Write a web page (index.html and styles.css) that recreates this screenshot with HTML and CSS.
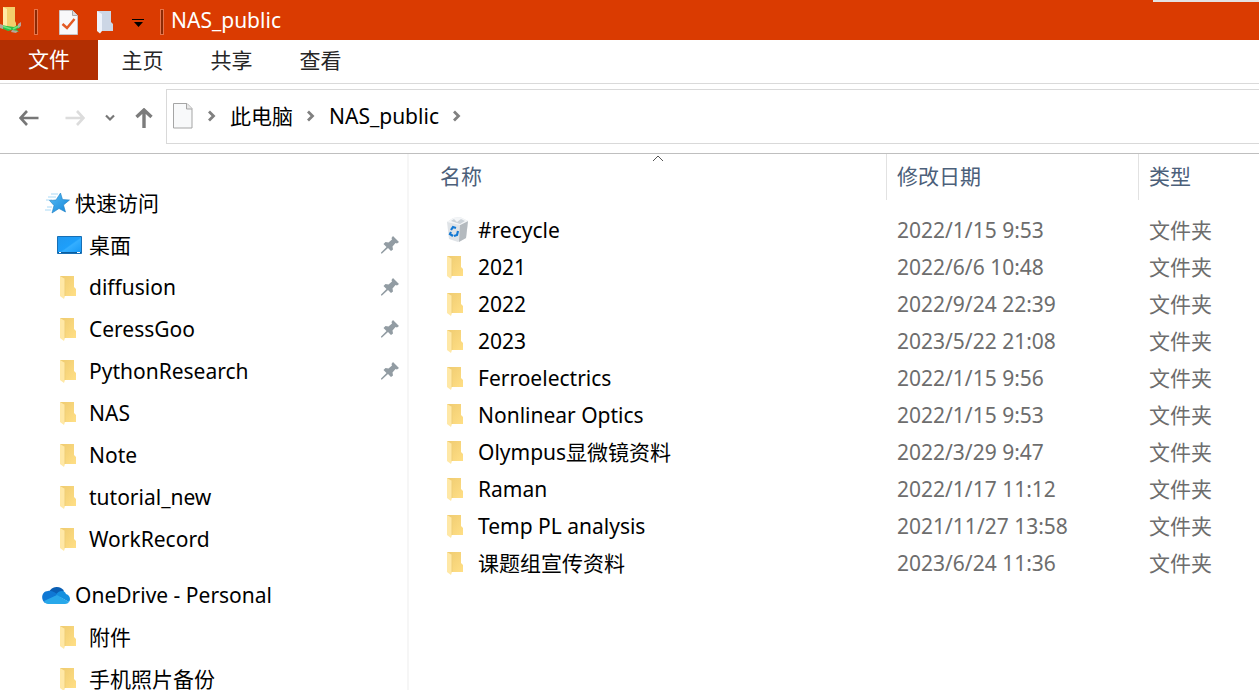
FILE: index.html
```html
<!DOCTYPE html>
<html lang="zh-CN">
<head>
<meta charset="utf-8">
<title>NAS_public</title>
<link rel="stylesheet" href="styles.css">
</head>
<body>
<svg class="sprite" aria-hidden="true">
  <defs>
    <linearGradient id="g-folder" x1="0" y1="0" x2="1" y2="1"><stop offset="0" stop-color="#efcb70"/><stop offset="1" stop-color="#ffdf86"/></linearGradient>
    <linearGradient id="g-desk" x1="0" y1="0" x2="1" y2="1"><stop offset="0" stop-color="#2098f0"/><stop offset=".5" stop-color="#1e9ffa"/><stop offset=".55" stop-color="#34aeff"/><stop offset="1" stop-color="#1497f5"/></linearGradient>
    <linearGradient id="g-star" x1="0" y1="0" x2="1" y2="1"><stop offset="0" stop-color="#55bdf5"/><stop offset="1" stop-color="#1684d8"/></linearGradient>
  </defs>
  <symbol id="folder" viewBox="0 0 18 24">
    <path d="M1 1h14v11l2 2v7H4z" fill="url(#g-folder)"/>
    <path d="M1 1l5 3v17l-1 3-4-3z" fill="#ffe8a6"/>
    <path d="M6 4v17" stroke="#efcf78" fill="none"/>
  </symbol>
  <symbol id="pin" viewBox="0 0 18 18">
    <path d="M12 0l6 6-2 1.500-1.500-.5-3 3.500.5 3-2 1.500-3-3L1 17.500H0v-1L5.500 11 2.500 8l2-2 3 .5L11 3.500 10.500 2z" fill="#929ca3"/>
  </symbol>
  <symbol id="sep" viewBox="0 0 8 12"><path d="M1 1.500L5.500 6 1 10.500" fill="none" stroke="#808080" stroke-width="2.800"/></symbol>
</svg>
<div class="window">
  <header class="titlebar">
    <svg class="net-icon" width="22" height="28" viewBox="0 0 22 28">
      <path d="M3 1h12v14l1 2v4H3z" fill="#f3cf6c"/><path d="M3 1l4 2v18l-4-2z" fill="#ffe9a6"/>
      <path d="M1 19l6 1 7 1 6-3v4l-4 1 3 3h-4l-3-2-4 1-7-3z" fill="#2fbf48"/><path d="M2 20l9 3M13 23l6-3" stroke="#6be37c" stroke-width="1.500" fill="none"/>
      <path d="M0 18l3 1v4l-3-1zM18 18l3-2v4l-3 2zM12 24l6 1-2 2-5-1z" fill="#b9a59a"/>
    </svg>
    <span class="divider"></span>
    <button class="quick quick-doc" aria-label="属性"><svg width="20" height="25" viewBox="0 0 20 25"><path d="M.5.500h13l5 5v19H.5z" fill="#f8f8fa" stroke="#c8c4c6"/><path d="M13.500.500v5h5" fill="#dadade" stroke="#aaa"/><path d="M3.500 14l4.500 4 7.500-9" fill="none" stroke="#e35a25" stroke-width="2.500"/></svg></button>
    <button class="quick quick-folder" aria-label="新建文件夹"><svg width="18" height="24" viewBox="0 0 18 24"><path d="M1 1h14v11l2 2v7H4z" fill="#ccd6e5"/><path d="M1 1l5 3v17l-2 2.500L1 21z" fill="#edf2fa"/></svg></button>
    <button class="quick quick-menu" aria-label="自定义快速访问工具栏"><svg width="12" height="10" viewBox="0 0 12 10"><path d="M0 1h12v1H0zM2 4h9L6.500 9z" fill="#000"/></svg></button>
    <span class="divider"></span>
    <h1 class="title">NAS_public</h1>
    <span class="edge"></span>
  </header>
  <nav class="ribbon">
    <button class="tab tab-file">文件</button>
    <button class="tab">主页</button>
    <button class="tab">共享</button>
    <button class="tab">查看</button>
  </nav>
  <div class="navbar">
    <div class="nav-buttons">
      <button aria-label="后退"><svg width="20" height="16" viewBox="0 0 20 16"><path d="M8 1L1.500 8 8 15M1.500 8H19.500" fill="none" stroke="#777" stroke-width="2.600"/></svg></button>
      <button aria-label="前进"><svg width="20" height="16" viewBox="0 0 20 16"><path d="M12 1l6.500 7-6.500 7M18.500 8H.5" fill="none" stroke="#dcdcdc" stroke-width="2.600"/></svg></button>
      <button aria-label="最近位置"><svg width="10" height="8" viewBox="0 0 10 8"><path d="M1 1.500l4 4 4-4" fill="none" stroke="#777" stroke-width="2.200"/></svg></button>
      <button aria-label="向上"><svg width="18" height="20" viewBox="0 0 18 20"><path d="M1.500 9L9 2 16.500 9M9 2v18" fill="none" stroke="#7c7c7c" stroke-width="3.400"/></svg></button>
    </div>
    <div class="address">
      <svg width="20" height="26" viewBox="0 0 20 26"><path d="M.5.500h13.500l5 5V25H.5z" fill="#f8f9fa" stroke="#a5a5a5"/><path d="M13.500.500v5.500h5.500" fill="#e8e8e8" stroke="#a5a5a5"/></svg>
      <svg class="sep" width="8" height="12"><use href="#sep"/></svg>
      <a href="#pc">此电脑</a>
      <svg class="sep" width="8" height="12"><use href="#sep"/></svg>
      <a href="#nas">NAS_public</a>
      <svg class="sep" width="8" height="12"><use href="#sep"/></svg>
    </div>
  </div>
  <div class="body">
    <aside class="sidebar">
      <a class="root" href="#quick"><svg width="28" height="22" viewBox="0 0 28 22"><path d="M9 2h7M6 5h8M4 8h6M5 15h5M3 18h6" stroke="#a9d9f6"/><path d="M18.500 1l2 6.500 7 .5-6 5 2 7-6.500-3.500-7 4.500 2-7.500-4.500-5 6.500-.5z" fill="url(#g-star)" stroke="#1c7fc4" stroke-width=".6"/></svg>快速访问</a>
      <ul>
        <li><a href="#desk"><svg class="desk" width="26" height="18" viewBox="0 0 26 18"><path d="M.5.500h24v17H.5z" fill="url(#g-desk)" stroke="#176fb5"/><path d="M1 16.500h23" stroke="#0b5d9e"/><path d="M2 16.500h2M20 16.500h3" stroke="#fff"/></svg>桌面</a><svg class="pin" width="18" height="18"><use href="#pin"/></svg></li>
        <li><a href="#1"><svg class="fold" width="18" height="24"><use href="#folder"/></svg>diffusion</a><svg class="pin" width="18" height="18"><use href="#pin"/></svg></li>
        <li><a href="#2"><svg class="fold" width="18" height="24"><use href="#folder"/></svg>CeressGoo</a><svg class="pin" width="18" height="18"><use href="#pin"/></svg></li>
        <li><a href="#3"><svg class="fold" width="18" height="24"><use href="#folder"/></svg>PythonResearch</a><svg class="pin" width="18" height="18"><use href="#pin"/></svg></li>
        <li><a href="#4"><svg class="fold" width="18" height="24"><use href="#folder"/></svg>NAS</a></li>
        <li><a href="#5"><svg class="fold" width="18" height="24"><use href="#folder"/></svg>Note</a></li>
        <li><a href="#6"><svg class="fold" width="18" height="24"><use href="#folder"/></svg>tutorial_new</a></li>
        <li><a href="#7"><svg class="fold" width="18" height="24"><use href="#folder"/></svg>WorkRecord</a></li>
      </ul>
      <a class="root" href="#onedrive"><svg width="28" height="20" viewBox="0 0 28 20"><path d="M7 7a8.500 8.500 0 0 1 15-1l-4 6z" fill="#0a5fb4"/><path d="M6 6c4-1 8 2 10 4L3 18C-2 14 0 6 6 6z" fill="#0f78d4"/><path d="M14 10c2-5 9-5 10-1 4 1 5 6 3 8z" fill="#1590df"/><path d="M2 16l13-6 12 7c-1 1-2 2-4 2H6c-2 0-3-1-4-3z" fill="#28a8ea"/></svg>OneDrive - Personal</a>
      <ul>
        <li><a href="#8"><svg class="fold" width="18" height="24"><use href="#folder"/></svg>附件</a></li>
        <li><a href="#9"><svg class="fold" width="18" height="24"><use href="#folder"/></svg>手机照片备份</a></li>
      </ul>
    </aside>
    <main class="files">
      <table>
        <colgroup><col class="c-name"><col class="c-date"><col></colgroup>
        <thead><tr><th scope="col">名称<svg class="sort" width="12" height="7" viewBox="0 0 12 7"><path d="M1 6l5-5 5 5" fill="none" stroke="#555"/></svg></th><th scope="col">修改日期</th><th scope="col">类型</th></tr></thead>
        <tbody>
          <tr><td><span class="name"><svg width="24" height="26" viewBox="0 0 24 26"><path d="M1 5l6-4 7-1 8 4-2 17-8 4-9-3z" fill="#dfe3e7"/><path d="M14 8l8-4-2 17-7 4z" fill="#b4babf"/><path d="M1 5l13 3 8-4-8-4-7 1z" fill="#f3f5f7"/><path d="M5 4l3-2 3 3 4-3 4 2-5 3z" fill="#cbd2d8"/><path d="M5 13l2-3 3 1M12 14l-1 4-3 1M7 19l-3-2 1-2" fill="none" stroke="#1479d4" stroke-width="2.200"/></svg>#recycle</span></td><td>2022/1/15 9:53</td><td>文件夹</td></tr>
          <tr><td><span class="name"><svg width="18" height="24"><use href="#folder"/></svg>2021</span></td><td>2022/6/6 10:48</td><td>文件夹</td></tr>
          <tr><td><span class="name"><svg width="18" height="24"><use href="#folder"/></svg>2022</span></td><td>2022/9/24 22:39</td><td>文件夹</td></tr>
          <tr><td><span class="name"><svg width="18" height="24"><use href="#folder"/></svg>2023</span></td><td>2023/5/22 21:08</td><td>文件夹</td></tr>
          <tr><td><span class="name"><svg width="18" height="24"><use href="#folder"/></svg>Ferroelectrics</span></td><td>2022/1/15 9:56</td><td>文件夹</td></tr>
          <tr><td><span class="name"><svg width="18" height="24"><use href="#folder"/></svg>Nonlinear Optics</span></td><td>2022/1/15 9:53</td><td>文件夹</td></tr>
          <tr><td><span class="name"><svg width="18" height="24"><use href="#folder"/></svg>Olympus显微镜资料</span></td><td>2022/3/29 9:47</td><td>文件夹</td></tr>
          <tr><td><span class="name"><svg width="18" height="24"><use href="#folder"/></svg>Raman</span></td><td>2022/1/17 11:12</td><td>文件夹</td></tr>
          <tr><td><span class="name"><svg width="18" height="24"><use href="#folder"/></svg>Temp PL analysis</span></td><td>2021/11/27 13:58</td><td>文件夹</td></tr>
          <tr><td><span class="name"><svg width="18" height="24"><use href="#folder"/></svg>课题组宣传资料</span></td><td>2023/6/24 11:36</td><td>文件夹</td></tr>
        </tbody>
      </table>
    </main>
  </div>
</div>
</body>
</html>
```
FILE: styles.css
```css
* { box-sizing: border-box; }
body {
  margin: 0;
  background: #fff;
  color: #000;
  font: 21px/28px "Noto Sans", "Noto Sans CJK SC", sans-serif;
}
button {
  border: 0;
  padding: 0;
  background: none;
  color: inherit;
  font: inherit;
}
a { color: inherit; text-decoration: none; }
ul { list-style: none; margin: 0; padding: 0; }
svg { display: block; flex: none; }
.sprite { position: absolute; width: 0; height: 0; }

.window {
  display: flex;
  flex-direction: column;
  height: 100vh;
  overflow: hidden;
}

.titlebar {
  position: relative;
  display: flex;
  align-items: center;
  flex: none;
  height: 40px;
  background: #da3b01;
  color: #fff;
}
.net-icon { margin: 0 12px 0 0; }
.divider {
  width: 4px;
  height: 26px;
  margin-top: 3px;
  border: 1px solid #e8744a;
  background: #8c2a05;
}
.quick { display: flex; margin-top: 4px; }
.quick-doc { margin-left: 21px; }
.quick-folder { margin-left: 17px; }
.quick-menu { margin: 6px 16px 0 18px; }
.title { margin: 0 0 0 7px; font-size: 21px; font-weight: 400; }
.edge {
  position: absolute;
  top: 0;
  right: 0;
  width: 106px;
  height: 2px;
  background: #e3e3e3;
}

.ribbon {
  display: flex;
  align-items: flex-start;
  flex: none;
  height: 44px;
  border-bottom: 1px solid #dadada;
}
.tab { width: 89px; height: 40px; color: #262626; }
.tab-file { width: 98px; padding-bottom: 2px; background: #b22f02; color: #fff; }

.navbar {
  display: flex;
  flex: none;
  height: 70px;
  padding: 5px 0 9px;
  border-bottom: 1px solid #bfbfbf;
}
.nav-buttons {
  display: flex;
  align-items: center;
  width: 166px;
  padding: 2px 0 0 19px;
}
.nav-buttons button { display: flex; margin-right: 26px; }
.nav-buttons button:nth-child(2), .nav-buttons button:nth-child(3) { margin-right: 20px; }
.address {
  display: flex;
  align-items: center;
  flex: 1;
  padding: 0 0 2px 6px;
  border: 1px solid #d9d9d9;
  border-right: 0;
}
.address a { margin: 0 14px; }
.address svg:first-child { margin-right: 15px; }

.body { display: flex; flex: 1; min-height: 0; }
.sidebar {
  flex: none;
  width: 409px;
  padding-top: 28px;
  border-right: 2px solid #f6f6f6;
  line-height: 22px;
}
.root {
  display: flex;
  align-items: center;
  gap: 5px;
  height: 42px;
  padding-left: 42px;
}
.sidebar ul + .root { margin-top: 14px; }
.sidebar li {
  display: flex;
  align-items: center;
  justify-content: space-between;
  height: 42px;
  padding: 0 8px 0 57px;
}
.sidebar li a { display: flex; align-items: center; }
.desk { margin-right: 6px; }
.fold { margin: 0 12px 0 2px; }

.files { flex: 1; min-width: 0; padding-left: 20px; }
table { width: 100%; table-layout: fixed; border-collapse: separate; border-spacing: 0; }
.c-name { width: 457px; }
.c-date { width: 252px; }
th {
  position: relative;
  height: 46px;
  padding: 0 10px 2px;
  border-left: 1px solid #e2e2e2;
  color: #4c607a;
  font-weight: 400;
  text-align: left;
}
th:first-child { border-left-color: transparent; }
.sort { position: absolute; top: 1px; left: calc(50% - 6px); }
tbody::before { content: ""; display: block; height: 11px; }
td { height: 37px; padding: 0 11px; color: #6d6d6d; }
td:first-child { padding-left: 17px; color: #000; }
.name { display: flex; align-items: center; }
.name svg { margin-right: 14px; }
.name svg[width="24"] { margin-right: 8px; }
```
